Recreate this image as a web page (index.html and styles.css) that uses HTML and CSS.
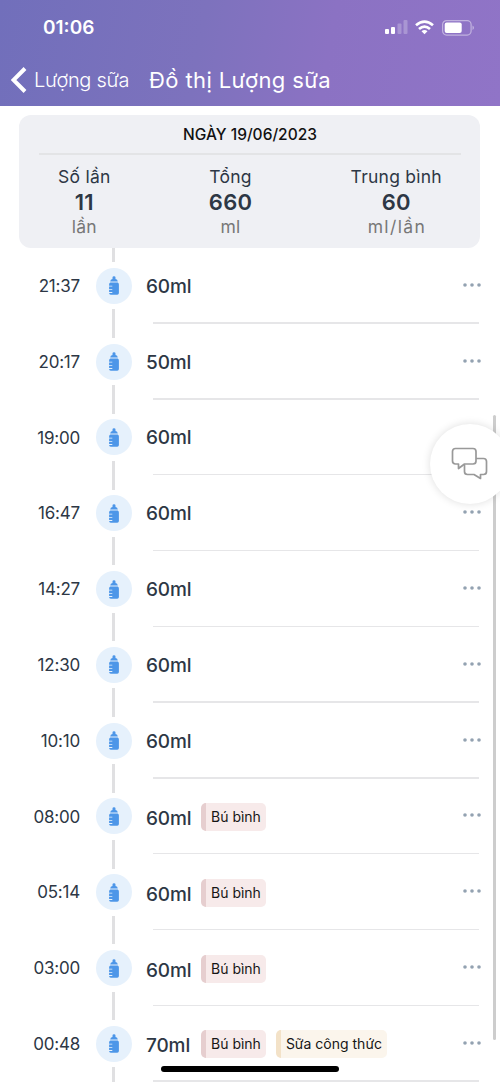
FILE: index.html
```html
<!DOCTYPE html>
<html lang="vi">
<head>
<meta charset="utf-8">
<title>Đồ thị Lượng sữa</title>
<link rel="stylesheet" href="styles.css">
</head>
<body>
<svg class="defs" width="0" height="0" aria-hidden="true">
  <symbol id="bottle" viewBox="0 0 10 19">
    <path d="M3.500 3V1.600Q3.500.2 5 .2t1.500 1.400V3Q8.600 3.300 8.800 5.400H1.200Q1.400 3.300 3.500 3Z"/>
    <path d="M1.300 6.500h7.400q1.200.7 1.200 2v8.400q0 1.800-1.700 1.800H1.800Q.1 18.700.1 17h3.200v-.9H.1v-2.300h3.200v-.9H.1v-2.300h3.200v-.9H.1V8.500Q.1 7.200 1.300 6.500Z"/>
  </symbol>
</svg>
<div class="phone">
  <header class="header">
    <div class="status">
      <span class="clock">01:06</span>
      <svg class="signal" width="23" height="15" viewBox="0 0 23 15" fill="#fff"><rect y="9" width="4" height="5" rx="1"/><rect x="6" y="7" width="4" height="7" rx="1"/><rect x="12.500" y="3.500" width="4" height="10.500" rx="1" opacity=".25"/><rect x="18.500" y="0" width="4" height="14" rx="1" opacity=".25"/></svg>
      <svg class="wifi" width="19" height="15" viewBox="0 0 19 15" fill="none" stroke="#fff" stroke-width="2.700"><path d="M1 5.200Q9.500-2 18 5.200M4 9Q9.500 4.200 15 9"/><path d="M6.500 11.200Q9.500 8.700 12.500 11.200L9.500 14.300Z" fill="#fff" stroke="none"/></svg>
      <svg class="battery" width="33" height="16" viewBox="0 0 33 16"><rect x=".6" y=".6" width="28.500" height="14.500" rx="4" fill="none" stroke="#fff" stroke-opacity=".45" stroke-width="1.200"/><rect x="2.700" y="2.600" width="17" height="10.500" rx="2" fill="#fff"/><path d="M30.500 5.500q3 2.200 0 4.600Z" fill="#fff" opacity=".45"/></svg>
    </div>
    <nav class="nav">
      <svg class="back" width="16" height="26" viewBox="0 0 16 26" fill="none" stroke="#fff" stroke-width="4"><path d="M14 1.500 2.500 13 14 24.500"/></svg>
      <span class="parent">Lượng sữa</span>
      <h1 class="title">Đồ thị Lượng sữa</h1>
    </nav>
  </header>
  <section class="summary">
    <h2 class="date">NGÀY 19/06/2023</h2>
    <div class="stats">
      <div class="stat"><span class="label">Số lần</span><strong>11</strong><span class="unit">lần</span></div>
      <div class="stat"><span class="label">Tổng</span><strong>660</strong><span class="unit">ml</span></div>
      <div class="stat"><span class="label wide">Trung bình</span><strong>60</strong><span class="unit spaced">ml/lần</span></div>
    </div>
  </section>
  <main class="timeline" id="timeline"></main>
  <div class="scrollbar"></div>
  <div class="chat"><svg width="38" height="34" viewBox="0 0 38 34" fill="none" stroke="#999" stroke-width="1.700" stroke-linejoin="round"><path d="M4.500 1.500H22Q25 1.500 25 4.500V14Q25 17 22 17H13.500L7.500 21.500V17H4.500Q1.500 17 1.500 14V4.500Q1.500 1.500 4.500 1.500Z"/><path d="M25 11.500H32.500Q35.500 11.500 35.500 14.500V24.500Q35.500 27.500 32.500 27.500H29.500V31.500L23 27.500H16.500Q13.500 27.500 13.500 24.500V17.500"/></svg></div>
  <div class="home"></div>
</div>
<script src="app.js"></script>
</body>
</html>
```

FILE: styles.css
```css
* { box-sizing: border-box; }
body { margin: 0; background: #fff; font-family: Inter, "Noto Sans", sans-serif; color: #2d3745; }
.defs { display: block; }
.phone { position: relative; width: 500px; height: 1082px; overflow: hidden; }
.header { height: 106px; color: #fff; background: linear-gradient(100deg, #716fbb 0%, #7d72bd 40%, #8b72c3 65%, #9074c7 100%); }
.status { display: flex; align-items: flex-start; height: 54px; padding: 15px 25px 0 43px; }
.clock { flex: 1; font-size: 19px; line-height: 26px; font-weight: 600; }
.signal { margin-top: 5px; }
.wifi { margin: 5px 0 0 7px; }
.battery { margin: 5px 0 0 8px; }
.nav { display: flex; align-items: center; height: 52px; padding-left: 11px; }
.parent { width: 115px; padding-left: 7px; font-size: 20px; font-weight: 300; letter-spacing: -.3px; white-space: nowrap; }
.title { margin: 0 0 0 7px; font-size: 22px; font-weight: 400; letter-spacing: .4px; white-space: nowrap; }
.summary { height: 133px; margin: 9px 20px 0 19px; padding: 0 19px 0 20px; border-radius: 12px; background: #eff0f4; }
.date { height: 40px; margin: 0; border-bottom: 2px solid #e3e4e6; color: #111; text-align: center; font-size: 15.500px; line-height: 39px; font-weight: 450; }
.stats { display: flex; justify-content: space-between; padding: 8px 19px 0; }
.stat { display: flex; flex-direction: column; align-items: center; white-space: nowrap; }
.label { font-size: 17.500px; line-height: 27px; letter-spacing: .25px; }
.stat strong { font-size: 22px; line-height: 25px; font-weight: 600; letter-spacing: .3px; }
.unit { font-size: 17.500px; line-height: 24px; color: #777; letter-spacing: .3px; }
.spaced { letter-spacing: 1.400px; margin-right: -1.400px; }
.row { display: grid; grid-template-columns: 80px 67px 1fr; height: 75.800px; }
.time { padding-top: 26px; line-height: 24px; text-align: right; font-size: 17px; letter-spacing: -.2px; }
.track { display: flex; flex-direction: column; align-items: center; justify-content: space-between; }
.line { width: 3px; height: 14.300px; background: #e0e0e2; }
.circle { display: flex; align-items: center; justify-content: center; width: 36px; height: 36px; border-radius: 50%; background: #e6f1fc; }
.circle svg { width: 10px; height: 19px; fill: #4d96e8; }
.entry { position: relative; display: flex; align-items: center; height: 75.800px; padding: 1px 21px 0 0; }
.entry::after { content: ""; position: absolute; left: 6px; right: 21px; bottom: 0; height: 1.400px; background: #e6e6e8; }
.amount { width: 54px; margin-left: -1px; margin-right: 1px; font-size: 19px; letter-spacing: -.1px; font-weight: 450; }
.tagged .amount { padding-top: 3px; }
.tag { height: 28px; margin-right: 10px; padding: 0 5px; border-left: 5px solid #e6cecf; border-radius: 5px; background: #f7eaea; color: #161616; font-size: 14px; line-height: 28px; white-space: nowrap; }
.formula { border-color: #f3e2c8; background: #fbf5ec; }
.dots { width: 18px; height: 4px; margin: 0 -2px 3px auto; fill: #93a2b1; }
.scrollbar { position: absolute; left: 493px; top: 415px; width: 3px; height: 625px; border-radius: 2px; background: #cdcdcd; }
.chat { position: absolute; left: 430px; top: 424px; width: 80px; height: 80px; padding: 23px 0 0 21px; border-radius: 50%; background: #fff; box-shadow: 0 0 8px #0002; }
.home { position: absolute; left: 161px; top: 1066px; width: 178px; height: 6px; border-radius: 3px; background: #000; }
```

FILE: app.js
```js
const entries = [
  ['21:37', '60ml'], ['20:17', '50ml'], ['19:00', '60ml'], ['16:47', '60ml'],
  ['14:27', '60ml'], ['12:30', '60ml'], ['10:10', '60ml'],
  ['08:00', '60ml', 'Bú bình'], ['05:14', '60ml', 'Bú bình'],
  ['03:00', '60ml', 'Bú bình'], ['00:48', '70ml', 'Bú bình', 'Sữa công thức']
];
document.getElementById('timeline').innerHTML = entries.map(([time, amount, ...tags]) => `
  <div class="row">
    <span class="time">${time}</span>
    <div class="track"><i class="line"></i><span class="circle"><svg><use href="#bottle"/></svg></span><i class="line"></i></div>
    <div class="entry ${tags.length ? 'tagged' : ''}">
      <span class="amount">${amount}</span>
      ${tags.map((tag, i) => `<span class="tag ${i ? 'formula' : ''}">${tag}</span>`).join('')}
      <svg class="dots" viewBox="0 0 18 4"><circle cx="2" cy="2" r="1.800"/><circle cx="9" cy="2" r="1.800"/><circle cx="16" cy="2" r="1.800"/></svg>
    </div>
  </div>`).join('');
```
